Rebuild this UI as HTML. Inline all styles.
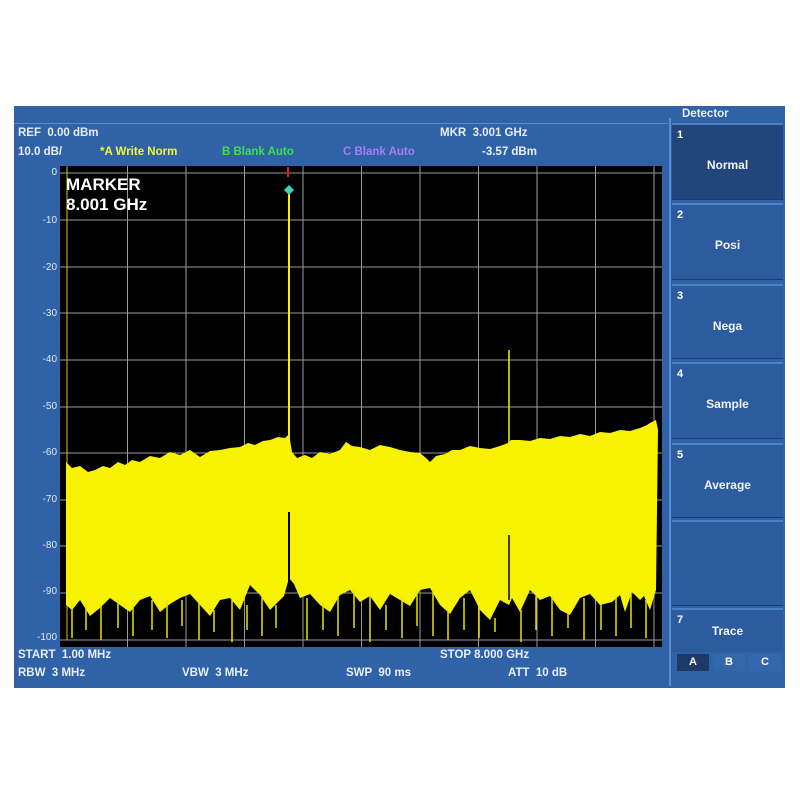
<!DOCTYPE html>
<html><head><style>
body{margin:0;width:800px;height:800px;background:#fff;position:relative;overflow:hidden;font-family:"Liberation Sans",sans-serif;}
.panel{position:absolute;left:14px;top:106px;width:771px;height:582px;background:#2f62a6;}
.t{position:absolute;font-size:11.5px;font-weight:bold;color:#e8eef8;white-space:nowrap;line-height:1;}
.btn{position:absolute;left:672px;width:111px;background:#2c5c9e;border-top:2px solid #4a80c4;border-bottom:1px solid #1b3d70;box-sizing:border-box;}
.btn .n{position:absolute;left:5px;top:4px;font-size:11px;font-weight:bold;color:#fff;}
.btn .l{position:absolute;left:0;right:0;text-align:center;font-size:12px;font-weight:bold;color:#f0f4fa;}
.yl{position:absolute;right:743px;font-size:10px;color:#dfe8f5;}
</style></head><body>
<div class="panel"></div>
<div style="position:absolute;left:14px;top:123px;width:654px;height:1px;background:#5a8ad0"></div>
<div style="position:absolute;left:669px;top:118px;width:2px;height:568px;background:#5a8ad0"></div>
<div class="t" style="left:18px;top:128px">REF &nbsp;0.00 dBm</div>
<div class="t" style="left:18px;top:147px">10.0 dB/</div>
<div class="t" style="left:100px;top:147px;color:#f4f43a">*A Write Norm</div>
<div class="t" style="left:222px;top:147px;color:#3ee04a">B Blank Auto</div>
<div class="t" style="left:343px;top:147px;color:#a77ff0">C Blank Auto</div>
<div class="t" style="left:440px;top:128px">MKR &nbsp;3.001 GHz</div>
<div class="t" style="left:482px;top:147px">-3.57 dBm</div>
<div class="t" style="left:680px;top:109px;background:#2f62a6;padding:0 2px">Detector</div>
<div class="yl" style="top:167px">0</div>
<div class="yl" style="top:215px">-10</div>
<div class="yl" style="top:262px">-20</div>
<div class="yl" style="top:308px">-30</div>
<div class="yl" style="top:354px">-40</div>
<div class="yl" style="top:401px">-50</div>
<div class="yl" style="top:447px">-60</div>
<div class="yl" style="top:494px">-70</div>
<div class="yl" style="top:540px">-80</div>
<div class="yl" style="top:586px">-90</div>
<div class="yl" style="top:632px">-100</div>
<svg style="position:absolute;left:0;top:0" width="800" height="800">
<rect x="60" y="166" width="602" height="481" fill="#000"/>
<g stroke="#9a9a9a" stroke-width="1">
<line x1="60" y1="173" x2="662" y2="173"/><line x1="60" y1="220" x2="662" y2="220"/><line x1="60" y1="267" x2="662" y2="267"/><line x1="60" y1="313" x2="662" y2="313"/><line x1="60" y1="360" x2="662" y2="360"/><line x1="60" y1="407" x2="662" y2="407"/><line x1="60" y1="453" x2="662" y2="453"/><line x1="60" y1="500" x2="662" y2="500"/><line x1="60" y1="546" x2="662" y2="546"/><line x1="60" y1="593" x2="662" y2="593"/><line x1="60" y1="640" x2="662" y2="640"/>
<line x1="127.5" y1="166" x2="127.5" y2="647"/><line x1="186" y1="166" x2="186" y2="647"/><line x1="244.5" y1="166" x2="244.5" y2="647"/><line x1="303" y1="166" x2="303" y2="647"/><line x1="361.5" y1="166" x2="361.5" y2="647"/><line x1="420" y1="166" x2="420" y2="647"/><line x1="478.5" y1="166" x2="478.5" y2="647"/><line x1="537" y1="166" x2="537" y2="647"/><line x1="595.5" y1="166" x2="595.5" y2="647"/><line x1="654" y1="166" x2="654" y2="647"/>
</g>
<line x1="67" y1="166" x2="67" y2="640" stroke="#c8c820" stroke-width="1"/>
<polygon fill="#f6f200" points="66,462 72,468 80,466 88,472 95,470 103,466 110,468 118,462 125,465 132,460 140,462 150,456 160,458 170,452 180,455 190,450 200,457 210,451 220,450 230,448 240,447 248,443 255,445 263,441 270,440 278,437 285,438 289,434 292,452 297,458 305,455 312,458 320,452 330,454 340,450 346,442 352,446 360,447 370,450 380,445 390,447 400,450 410,452 420,453 426,458 430,462 436,456 445,454 452,450 460,450 470,446 480,448 490,449 500,446 508,443 511,440 520,440 530,441 540,438 550,439 560,436 570,437 580,434 590,436 600,432 610,433 620,430 630,431 640,428 647,425 650,423 656,420 658,430 656,590 650,610 644,596 640,600 632,592 625,612 620,595 612,602 600,605 590,594 580,598 570,615 560,610 550,596 540,600 530,590 520,612 512,598 509,605 500,600 490,620 480,610 470,590 460,598 450,614 440,605 430,588 420,590 410,606 400,600 390,594 380,610 370,596 360,602 350,590 340,595 330,612 320,605 310,594 300,598 294,584 289,578 284,596 280,600 270,610 260,595 250,585 240,610 230,598 220,600 210,616 200,605 190,594 180,598 170,604 160,612 150,596 140,600 130,612 120,605 110,598 100,608 90,616 80,600 72,610 66,605"/>
<g stroke="#e8e400" stroke-width="1.5">
<line x1="72" y1="600" x2="72" y2="638"/><line x1="86" y1="605" x2="86" y2="630"/><line x1="101" y1="605" x2="101" y2="640"/><line x1="118" y1="600" x2="118" y2="628"/><line x1="133" y1="605" x2="133" y2="636"/><line x1="152" y1="600" x2="152" y2="630"/><line x1="167" y1="600" x2="167" y2="638"/><line x1="182" y1="600" x2="182" y2="626"/><line x1="199" y1="600" x2="199" y2="640"/><line x1="214" y1="610" x2="214" y2="632"/><line x1="232" y1="600" x2="232" y2="642"/><line x1="247" y1="605" x2="247" y2="630"/><line x1="262" y1="598" x2="262" y2="636"/><line x1="276" y1="605" x2="276" y2="628"/><line x1="307" y1="598" x2="307" y2="640"/><line x1="323" y1="600" x2="323" y2="630"/><line x1="338" y1="595" x2="338" y2="636"/><line x1="354" y1="590" x2="354" y2="628"/><line x1="370" y1="596" x2="370" y2="642"/><line x1="386" y1="605" x2="386" y2="630"/><line x1="402" y1="598" x2="402" y2="638"/><line x1="417" y1="590" x2="417" y2="626"/><line x1="433" y1="590" x2="433" y2="636"/><line x1="448" y1="610" x2="448" y2="640"/><line x1="464" y1="598" x2="464" y2="630"/><line x1="479" y1="608" x2="479" y2="638"/><line x1="495" y1="618" x2="495" y2="632"/><line x1="521" y1="610" x2="521" y2="642"/><line x1="536" y1="596" x2="536" y2="630"/><line x1="552" y1="596" x2="552" y2="636"/><line x1="568" y1="612" x2="568" y2="628"/><line x1="584" y1="598" x2="584" y2="640"/><line x1="601" y1="604" x2="601" y2="630"/><line x1="616" y1="596" x2="616" y2="636"/><line x1="631" y1="594" x2="631" y2="628"/><line x1="646" y1="600" x2="646" y2="638"/>
</g>
<line x1="289" y1="192" x2="289" y2="440" stroke="#f6f200" stroke-width="2"/>
<line x1="289" y1="512" x2="289" y2="590" stroke="#000" stroke-width="2"/>
<line x1="509" y1="350" x2="509" y2="445" stroke="#f6f200" stroke-width="1.5"/>
<line x1="509" y1="535" x2="509" y2="600" stroke="#000" stroke-width="1.5"/>
<line x1="288" y1="167" x2="288" y2="177" stroke="#e02020" stroke-width="2"/>
<polygon points="289,185 294,190 289,195 284,190" fill="#40d0c0"/>
</svg>
<div class="t" style="left:66px;top:176px;font-size:17px;color:#fff">MARKER</div>
<div class="t" style="left:66px;top:196px;font-size:17px;color:#fff">8.001 GHz</div>
<div class="t" style="left:18px;top:650px">START &nbsp;1.00 MHz</div>
<div class="t" style="left:440px;top:650px">STOP 8.000 GHz</div>
<div class="t" style="left:18px;top:668px">RBW &nbsp;3 MHz</div>
<div class="t" style="left:182px;top:668px">VBW &nbsp;3 MHz</div>
<div class="t" style="left:346px;top:668px">SWP &nbsp;90 ms</div>
<div class="t" style="left:508px;top:668px">ATT &nbsp;10 dB</div>
<div class="btn" style="top:123px;height:77px;background:#22467c"><span class="n">1</span><span class="l" style="top:33px">Normal</span></div>
<div class="btn" style="top:203px;height:77px"><span class="n">2</span><span class="l" style="top:33px">Posi</span></div>
<div class="btn" style="top:284px;height:75px"><span class="n">3</span><span class="l" style="top:33px">Nega</span></div>
<div class="btn" style="top:362px;height:77px"><span class="n">4</span><span class="l" style="top:33px">Sample</span></div>
<div class="btn" style="top:443px;height:75px"><span class="n">5</span><span class="l" style="top:33px">Average</span></div>
<div class="btn" style="top:520px;height:86px"></div>
<div class="btn" style="top:608px;height:44px;border-bottom:none"><span class="n">7</span><span class="l" style="top:14px">Trace</span></div>
<div style="position:absolute;left:677px;top:654px;width:32px;height:17px;background:#1d3a68;color:#fff;font:bold 11px 'Liberation Sans';text-align:center;line-height:17px">A</div>
<div style="position:absolute;left:713px;top:654px;width:32px;height:17px;background:#3366aa;color:#fff;font:bold 11px 'Liberation Sans';text-align:center;line-height:17px">B</div>
<div style="position:absolute;left:749px;top:654px;width:32px;height:17px;background:#3366aa;color:#fff;font:bold 11px 'Liberation Sans';text-align:center;line-height:17px">C</div>
</body></html>
